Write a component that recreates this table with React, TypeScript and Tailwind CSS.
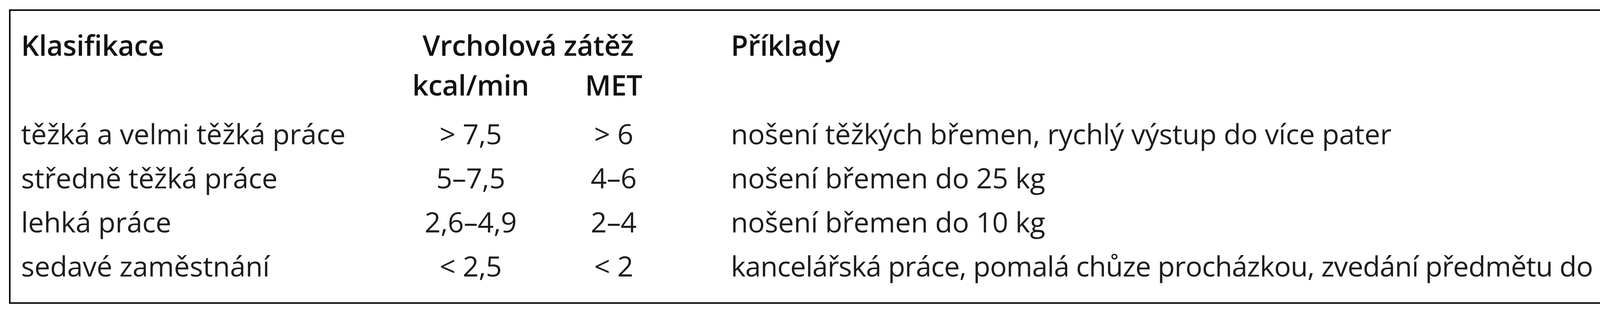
import React from 'react';

interface Row {
  name: string;
  kcal: string;
  met: string;
  example: string;
  tight?: boolean;
}

const rows: Row[] = [
  { name: 'těžká a velmi těžká práce', kcal: '> 7,5', met: '> 6', example: 'nošení těžkých břemen, rychlý výstup do více pater' },
  { name: 'středně těžká práce', kcal: '5–7,5', met: '4–6', example: 'nošení břemen do 25 kg' },
  { name: 'lehká práce', kcal: '2,6–4,9', met: '2–4', example: 'nošení břemen do 10 kg' },
  {
    name: 'sedavé zaměstnání',
    kcal: '< 2,5',
    met: '< 2',
    example: 'kancelářská práce, pomalá chůze procházkou, zvedání předmětu do 5 kg atd',
    tight: true,
  },
];

// shared column template so header and body line up
const cols = 'grid grid-cols-[946px_410px_322px_minmax(0,1fr)]';

const App: React.FC = () => {
  return (
    <div className="w-[4402px] h-[800px] overflow-hidden bg-white pt-[24px] pl-[23px] font-['Open_Sans',sans-serif] text-[72px] tracking-[-0.3px] text-[#1c1c1c]">
      <div className="w-[4371px] border-4 border-[#0a0a0a] pt-[36px] pb-[37px] pl-[27px]">
        {/* Header */}
        <div className={`${cols} leading-[102px] font-semibold text-[#111]`}>
          <div>Klasifikace</div>
          <div className="col-span-2 text-center pr-[28px]">Vrcholová zátěž</div>
          <div className="pl-[139px]">Příklady</div>
        </div>
        <div className={`${cols} leading-[102px] font-semibold text-[#111]`}>
          <div />
          <div className="text-center">kcal/min</div>
          <div className="text-center">MET</div>
          <div />
        </div>

        {/* Body */}
        <div className="mt-[18px] flex flex-col">
          {rows.map((row) => (
            <div key={row.name} className={`${cols} leading-[113px]`}>
              <div>{row.name}</div>
              <div className="text-center">{row.kcal}</div>
              <div className="text-center">{row.met}</div>
              <div className={`pl-[139px] whitespace-nowrap ${row.tight ? 'tracking-[-1.1px]' : ''}`}>
                {row.example}
              </div>
            </div>
          ))}
        </div>
      </div>
    </div>
  );
};

export default App;
